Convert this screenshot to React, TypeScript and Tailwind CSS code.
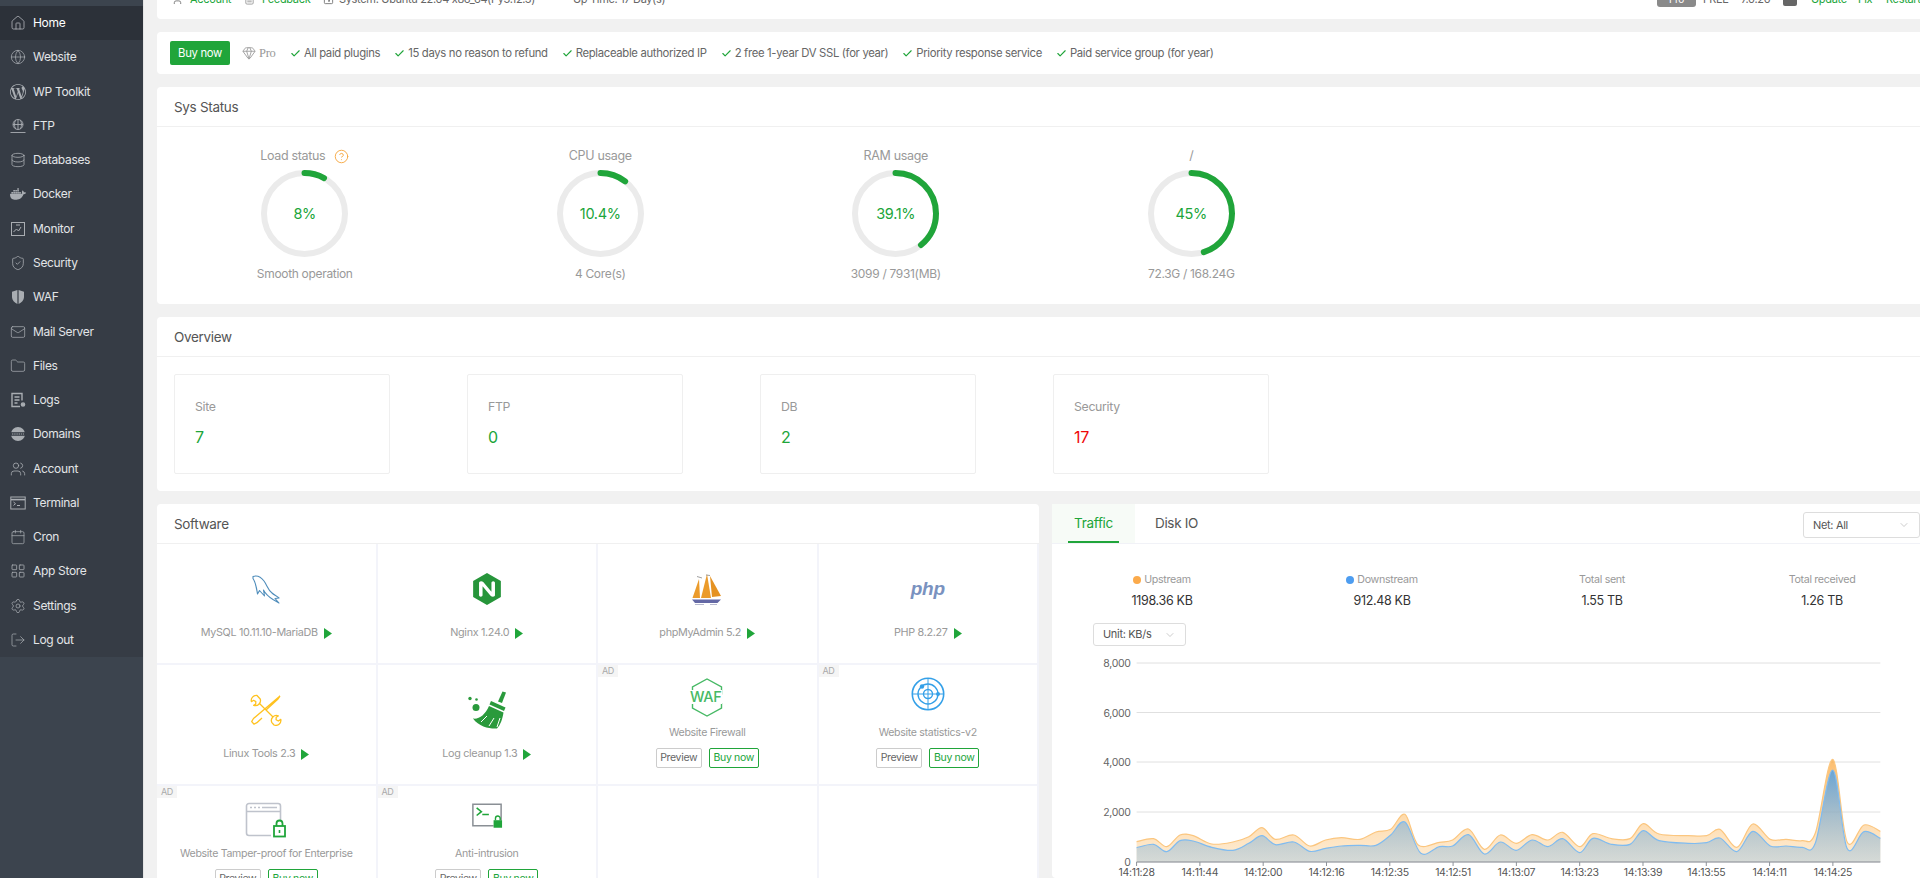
import React from "react";
import {
  House, Globe, Database, ShieldCheck, Mail, Folder, Users, Calendar, LayoutGrid, Settings, LogOut, Check, ChevronDown, Gem, CircleHelp, FileText, User, ActivitySquare,
} from "lucide-react";
import { SiWordpress, SiDocker, SiNginx } from "react-icons/si";

const ic = "w-[16px] h-[16px] text-[#a9adb2]";

function FtpIcon() {
  return (
    <svg viewBox="0 0 16 16" className={ic} fill="none" stroke="currentColor" strokeWidth="0.9">
      <circle cx="8" cy="6.5" r="5" />
      <path d="M3 6.5h10M8 1.5v10M5.5 2.2c-1.3 2.6-1.3 6 0 8.6M10.5 2.2c1.3 2.6 1.3 6 0 8.6M0.5 14.5h15" />
    </svg>
  );
}
function MonitorIcon() {
  return (
    <svg viewBox="0 0 16 16" className={ic} fill="none" stroke="currentColor" strokeWidth="1">
      <rect x="1.5" y="1.5" width="13" height="13" />
      <path d="M3.5 11l3-3 2 2 2.5-4M6 4h4" />
    </svg>
  );
}
function WafIcon() {
  return (
    <svg viewBox="0 0 16 16" className={ic} fill="currentColor">
      <path d="M7.4 1 2 2.8v5.4c0 3 2.5 5.3 5.4 6.8zM8.6 1 14 2.8v5.4c0 3-2.5 5.3-5.4 6.8z" />
    </svg>
  );
}
function LogsIcon() {
  return (
    <svg viewBox="0 0 16 16" className={ic} fill="none" stroke="currentColor" strokeWidth="1.4">
      <path d="M10 14.5H2V1.5h10v7M4.5 5h5M4.5 8h5M4.5 11h3" />
      <circle cx="13" cy="12.5" r="1.6" fill="currentColor" />
    </svg>
  );
}
function DomainsIcon() {
  return (
    <svg viewBox="0 0 16 16" className={ic}>
      <circle cx="8" cy="8" r="7" fill="currentColor" />
      <rect x="0" y="6.2" width="16" height="3.6" fill="#363c45" />
      <path d="M2 8h12" stroke="currentColor" strokeWidth="1.2" strokeDasharray="1.4 .8" />
    </svg>
  );
}
function TerminalIcon() {
  return (
    <svg viewBox="0 0 16 16" className={ic} fill="none" stroke="currentColor" strokeWidth="1">
      <rect x="0.8" y="2" width="14.4" height="12" />
      <path d="M1 4.6h14" strokeWidth="1.6" />
      <path d="M3.5 7l2 1.7-2 1.7M7 10.5h3" />
    </svg>
  );
}

const nav: [string, React.ReactNode][] = [
  ["Home", <House key="a" className={ic} strokeWidth={1.3} />],
  ["Website", <Globe key="a" className={ic} strokeWidth={1.1} />],
  ["WP Toolkit", <SiWordpress key="a" className={ic} />],
  ["FTP", <FtpIcon key="a" />],
  ["Databases", <Database key="a" className={ic} strokeWidth={1.2} />],
  ["Docker", <SiDocker key="a" className={ic} />],
  ["Monitor", <MonitorIcon key="a" />],
  ["Security", <ShieldCheck key="a" className={ic} strokeWidth={1.2} />],
  ["WAF", <WafIcon key="a" />],
  ["Mail Server", <Mail key="a" className={ic} strokeWidth={1.1} />],
  ["Files", <Folder key="a" className={ic} strokeWidth={1.1} />],
  ["Logs", <LogsIcon key="a" />],
  ["Domains", <DomainsIcon key="a" />],
  ["Account", <Users key="a" className={ic} strokeWidth={1.2} />],
  ["Terminal", <TerminalIcon key="a" />],
  ["Cron", <Calendar key="a" className={ic} strokeWidth={1.1} />],
  ["App Store", <LayoutGrid key="a" className={ic} strokeWidth={1.2} />],
  ["Settings", <Settings key="a" className={ic} strokeWidth={1.1} />],
  ["Log out", <LogOut key="a" className={ic} strokeWidth={1.1} />],
];

function Gauge({ title, pct, sub, help }: { title: string; pct: number; sub: string; help?: boolean }) {
  const r = 40.5;
  const c = 2 * Math.PI * r;
  return (
    <div className="w-[295.5px] flex flex-col items-center">
      <div className="flex items-center gap-[9px] text-[12.5px] leading-[20px] text-[#999] h-[20px]">
        <span>{title}</span>
        {help && <CircleHelp className="w-[15px] h-[15px] text-[#f5a742]" strokeWidth={1.5} />}
      </div>
      <div className="grid place-items-center mt-[4px] w-[87px] h-[87px]">
        <svg viewBox="0 0 87 87" className="w-[87px] h-[87px] [grid-area:1/1] -rotate-90">
          <circle cx="43.5" cy="43.5" r={r} fill="none" stroke="#ebebeb" strokeWidth="6" />
          <circle cx="43.5" cy="43.5" r={r} fill="none" stroke="#20a53a" strokeWidth="6" strokeLinecap="round" strokeDasharray={`${(pct / 100) * c} ${c}`} />
        </svg>
        <span className="[grid-area:1/1] text-[14.5px] text-[#20a53a]">{pct}%</span>
      </div>
      <div className="mt-[7px] text-[12px] leading-[20px] text-[#999]">{sub}</div>
    </div>
  );
}

function Dolphin() {
  return (
    <svg viewBox="0 0 28 29" className="w-[28px] h-[29px]" fill="none" stroke="#4f8dbb" strokeWidth="1.1" strokeLinejoin="round">
      <path d="M1 1.5C5 0 9 2 12 6C15 10 16 15 20 18C22 20 25 21 27 23L23 23.5L27 28L21 24.5C17 22 14 20 11.5 15L12.5 21L7.5 15.5L5.5 19C4.5 13 4 8 1 3.5Z" />
    </svg>
  );
}
function Broom() {
  return (
    <svg viewBox="0 0 40 38" className="w-[40px] h-[38px]" fill="#2a9a3c">
      <path d="M35.5 0.5L39 1.5L35 12L31 10.5Z" />
      <path d="M24 10L38.5 16.5L37 20L22.5 13.5Z" />
      <path d="M22 15L36.5 21.5C35.5 28 33.5 34 30 37.5C23 38 12 36 6 27.5C12 28.5 18 24 22 15Z" />
      <path d="M14 31l6-6M22 35l5-8M30 36l3-9" stroke="#fff" strokeWidth="1" fill="none" />
      <circle cx="3" cy="7.5" r="1.7" />
      <circle cx="9.5" cy="8.5" r="1.3" />
      <circle cx="9" cy="16.5" r="3.5" />
    </svg>
  );
}
function Tools() {
  return (
    <svg viewBox="0 0 32 32" className="w-[32px] h-[32px]" fill="none" stroke="#ffc21f" strokeWidth="1.3" strokeLinejoin="round">
      <path d="M30 2 3.5 24.5l-1.8 3 2.2 2.7 3-1.5L12 24M30 2l-2.5 3.5L16 16" />
      <path d="M9 9 23 23" />
      <path d="M7 1.5a5 5 0 0 0-5.6 6.2l2.2-1.4 2.2 1.3-.1 2.5-2 1.2a5 5 0 0 0 6.5-6.3Z" />
      <path d="M24 31a5 5 0 0 0 6.8-5.6l-2.5 1.6-2.2-1.2.1-2.6 2.1-1.3a5 5 0 0 0-6.6 6.4Z" />
    </svg>
  );
}
function Ship() {
  return (
    <svg viewBox="0 0 30 32" className="w-[30px] h-[32px]">
      <path d="M7 6 0.5 25H8z" fill="#eb9b2b" />
      <path d="M15 1 9 25h10z" fill="#eb9b2b" />
      <path d="M18 3 29 23l-9 1z" fill="#e59222" />
      <path d="M5 3.5l5 1.5M14 2l4 .5" stroke="#777" strokeWidth=".7" />
      <path d="M0 26.5h29l-3.5 3.500H3z" fill="#6468a5" />
      <path d="M3 31.5h9M18 31.5h7" stroke="#b6b8cf" strokeWidth="1" />
    </svg>
  );
}
function Shield() {
  return (
    <div className="grid place-items-center w-[36px] h-[40px]">
      <svg viewBox="0 0 36 40" className="w-[36px] h-[40px] [grid-area:1/1]" fill="none" stroke="#47b965" strokeWidth="1.4">
        <path d="M32.5 17.5V10L18 2 3.5 10v4M3.5 26v5L18 39l14.5-8V26" />
      </svg>
      <span className="[grid-area:1/1] text-[14.5px] font-medium text-[#47b965] -ml-[3px] bg-white leading-[14px]">WAF</span>
    </div>
  );
}
function Radar() {
  return (
    <svg viewBox="0 0 34 34" className="w-[34px] h-[34px]" fill="none" stroke="#34a0e8" strokeWidth="1.4">
      <circle cx="17" cy="17" r="15.7" strokeWidth="1.6" />
      <circle cx="17" cy="17" r="10" />
      <circle cx="17" cy="17" r="4.5" />
      <path d="M17 1v32M1 17h32" strokeWidth="1" />
      <circle cx="11" cy="9.5" r="2.2" fill="#34a0e8" stroke="none" />
      <circle cx="27" cy="17" r="2" fill="#34a0e8" stroke="none" />
    </svg>
  );
}
function Tamper() {
  return (
    <svg viewBox="0 0 42 36" className="w-[42px] h-[36px]" fill="none">
      <path d="M26 33.5H4a2.500 2.500 0 0 1-2.500-2.500V4A2.500 2.500 0 0 1 4 1.500h29A2.500 2.500 0 0 1 35.500 4v15" stroke="#bfc3cc" strokeWidth="1.6" />
      <path d="M2 9.5h33" stroke="#bfc3cc" strokeWidth="1.4" />
      <path d="M5 5.5h2M9 5.5h2M13 5.5h2M17 5.5h15" stroke="#bfc3cc" strokeWidth="1.6" />
      <rect x="29" y="24" width="11" height="10.5" stroke="#20a53a" strokeWidth="1.8" />
      <path d="M31.5 24v-2.5a3 3 0 0 1 6 0V24" stroke="#20a53a" strokeWidth="1.8" />
      <path d="M34.5 28v3" stroke="#20a53a" strokeWidth="1.6" />
    </svg>
  );
}
function Anti() {
  return (
    <svg viewBox="0 0 34 28" className="w-[32px] h-[27px]" fill="none">
      <path d="M24 25H2V2h30v17" stroke="#8a8f95" strokeWidth="1.6" />
      <path d="M6 6l5 4-5 4M12 13h7" stroke="#20a53a" strokeWidth="1.7" />
      <rect x="24" y="19" width="9" height="8" fill="#20a53a" />
      <path d="M26 19v-2a2.5 2.5 0 0 1 5 0v2" stroke="#20a53a" strokeWidth="1.5" />
    </svg>
  );
}

function SoftCell({ icon, name, ad, clip }: { icon: React.ReactNode; name: string; ad?: boolean; clip?: boolean }) {
  if (ad) {
    return (
      <div className="relative h-[121px] border-r-2 border-b-2 border-[#f3f4fa] flex flex-col items-center">
        <span className="absolute left-0 top-0 w-[20px] h-[12px] bg-[#f5f5f5] text-[9px] leading-[12px] text-center text-[#aaa]">AD</span>
        <div className={`${clip ? "h-[59px] pt-[16px]" : "h-[59px] pt-[12px]"} flex items-start justify-center`}>{icon}</div>
        <div className="text-[10.6px] leading-[16px] text-[#999] mt-[1px] h-[16px] whitespace-nowrap">{name}</div>
        <div className="flex gap-[7px] mt-[7px]">
          <span className="w-[46px] h-[20px] flex items-center justify-center rounded-[2px] border border-[#ccc] text-[10.5px] text-[#666]">Preview</span>
          <span className="w-[50px] h-[20px] flex items-center justify-center rounded-[2px] border border-[#20a53a] text-[10.5px] text-[#20a53a]">Buy now</span>
        </div>
      </div>
    );
  }
  return (
    <div className="h-[121px] border-r-2 border-b-2 border-[#f3f4fa] flex flex-col items-center">
      <div className="h-[40px] mt-[25px] flex items-center justify-center">{icon}</div>
      <div className="mt-[16px] flex items-center gap-[6px] text-[10.8px] leading-[16px] text-[#999] whitespace-nowrap">
        {name}
        <svg viewBox="0 0 8 11" className="w-[8px] h-[11px]" fill="#20a53a"><path d="M0 0 8 5.5 0 11Z" /></svg>
      </div>
    </div>
  );
}

const oz = "88,365;120,356;145,380;170,345;195,347;230,372;270,366;300,350;325,323;350,358;385,345;415,378;445,360;475,353;510,358;540,336;568,328;595,283;620,375;660,367;685,360;715,327;745,388;775,345;805,370;835,344;865,360;893,337;925,380;950,341;985,356;1020,356;1045,311;1075,342;1130,347;1165,347;1190,328;1222,382;1252,312;1285,358;1315,358;1345,362;1370,340;1403,118;1430,365;1462,315;1493,334";
const bz = "88,383;120,373;145,395;170,362;195,363;230,382;270,391;300,370;325,347;350,374;385,366;415,394;445,385;475,378;510,376;540,376;568,345;595,306;625,400;660,380;685,378;715,344;745,402;775,366;805,391;835,360;865,380;893,356;925,398;950,355;985,373;1020,373;1045,332;1075,362;1130,370;1165,368;1190,354;1222,395;1252,334;1285,378;1315,378;1345,382;1370,370;1403,150;1430,385;1462,335;1493,355";

function pts(s: string) {
  return s.split(";").map((p) => {
    const [x, y] = p.split(",").map(Number);
    return [1090 + x / 1.889 - 1052, 720 + y / 3 - 650] as [number, number];
  });
}
function smooth(p: [number, number][]) {
  let d = `M${p[0][0]},${p[0][1]}`;
  for (let i = 0; i < p.length - 1; i++) {
    const p0 = p[Math.max(i - 1, 0)];
    const p1 = p[i];
    const p2 = p[i + 1];
    const p3 = p[Math.min(i + 2, p.length - 1)];
    const c1x = p1[0] + (p2[0] - p0[0]) / 6;
    const c1y = p1[1] + (p2[1] - p0[1]) / 6;
    const c2x = p2[0] - (p3[0] - p1[0]) / 6;
    const c2y = p2[1] - (p3[1] - p1[1]) / 6;
    d += `C${c1x},${c1y} ${c2x},${c2y} ${p2[0]},${p2[1]}`;
  }
  return d;
}

function Chart() {
  const o = pts(oz);
  const b = pts(bz);
  const base = 212;
  const x0 = o[0][0];
  const x1 = o[o.length - 1][0];
  const od = smooth(o);
  const bd = smooth(b);
  const ys: [number, string][] = [[13, "8,000"], [62.5, "6,000"], [112, "4,000"], [162, "2,000"], [212, "0"]];
  const times = ["14:11:28", "14:11:44", "14:12:00", "14:12:16", "14:12:35", "14:12:51", "14:13:07", "14:13:23", "14:13:39", "14:13:55", "14:14:11", "14:14:25"];
  return (
    <svg viewBox="0 0 868 228" className="w-[868px] h-[228px] mt-[4px] shrink-0">
      <defs>
        <linearGradient id="og" gradientUnits="userSpaceOnUse" x1="0" x2="0" y1="108" y2="212">
          <stop offset="0" stopColor="#fba63c" stopOpacity="0.75" />
          <stop offset="1" stopColor="#fdb95c" stopOpacity="0.25" />
        </linearGradient>
        <linearGradient id="bg" gradientUnits="userSpaceOnUse" x1="0" x2="0" y1="118" y2="212">
          <stop offset="0" stopColor="#4d9ee6" stopOpacity="0.85" />
          <stop offset="1" stopColor="#9dbfd8" stopOpacity="0.42" />
        </linearGradient>
      </defs>
      {ys.map(([y, t]) => (
        <g key={t}>
          <line x1={x0} x2={x1} y1={y} y2={y} stroke="#e0e0e0" strokeWidth="1" />
          <text x={x0 - 6} y={y + 4} textAnchor="end" fontSize="10.5" fill="#666">{t}</text>
        </g>
      ))}
      <path d={`${od}L${x1},${base}L${x0},${base}Z`} fill="url(#og)" />
      <path d={od} fill="none" stroke="#fbc67f" strokeWidth="1.2" />
      <path d={`${bd}L${x1},${base}L${x0},${base}Z`} fill="url(#bg)" />
      <path d={bd} fill="none" stroke="#7fbbf0" strokeWidth="1.2" />
      <line x1={x0} x2={x1} y1={base} y2={base} stroke="#8d9299" strokeWidth="1.2" />
      {times.map((t, i) => {
        const x = x0 + i * 63.3;
        return (
          <g key={t}>
            <line x1={x} x2={x} y1={base} y2={base + 4} stroke="#8d9299" />
            <text x={x} y={base + 14} textAnchor="middle" fontSize="10.5" fill="#555">{t}</text>
          </g>
        );
      })}
    </svg>
  );
}

export default function App() {
  const perks: string[] = ["All paid plugins", "15 days no reason to refund", "Replaceable authorized IP", "2 free 1-year DV SSL (for year)", "Priority response service", "Paid service group (for year)"];
  return (
    <div className="flex h-screen overflow-hidden bg-[#f1f1f1] text-[#666] tracking-[-0.02em] [font-family:Inter,'Noto_Sans',sans-serif]">
      <aside className="w-[143px] shrink-0 bg-[#3c444e] pt-[6px]">
        {nav.map(([name, icon], i) => (
          <div key={name} className={`h-[34.28px] flex items-center gap-[7px] pl-[10px] text-[12px] ${i === 0 ? "bg-[#2c3139] text-white" : "bg-[#363c45] text-[#e3e5e7]"}`}>
            <span className="w-[16px] flex justify-center">{icon}</span>
            {name}
          </div>
        ))}
      </aside>
      <div className="w-[14px] shrink-0 border-l border-[#e4e4e4]" />
      <main className="flex-1 min-w-0 flex flex-col gap-[13px] -mt-[31px]">
        <section className="shrink-0 h-[50px] pt-[10px] bg-white rounded-bl-[4px] flex items-center justify-between pl-[15px] text-[11px] text-[#666] whitespace-nowrap">
          <div className="flex items-center">
            <User className="w-[11px] h-[11px] text-[#777]" />
            <span className="ml-[7px] w-[39px] text-[#20a53a]">Account</span>
            <FileText className="ml-[15px] w-[11px] h-[11px] text-[#999]" />
            <span className="ml-[7px] w-[45px] text-[#20a53a]">Feedback</span>
            <ActivitySquare className="ml-[16px] w-[11px] h-[11px] text-[#777]" />
            <span className="ml-[5px] w-[207px]">System: Ubuntu 22.04 x86_64(Py3.12.3)</span>
            <span className="ml-[27px]">Up Time: 17 Day(s)</span>
          </div>
          <div className="flex items-center">
            <span className="w-[39px] h-[16px] bg-[#8a8a8a] rounded-[3px] text-white text-center text-[10px] leading-[16px]">Pro</span>
            <span className="ml-[7px] w-[24px]">FREE</span>
            <span className="ml-[14px] w-[27px]">7.0.20</span>
            <span className="ml-[15px] w-[14px] h-[14px] bg-[#666] rounded-[2px]" />
            <span className="ml-[14px] w-[34px] text-[#20a53a]">Update</span>
            <span className="ml-[13px] w-[14px] text-[#20a53a]">Fix</span>
            <span className="ml-[14px] w-[34px] text-[#20a53a]">Restart</span>
          </div>
        </section>

        <section className="shrink-0 h-[42px] bg-white rounded-l-[4px] flex items-center pl-[13px] text-[11.3px] text-[#666] whitespace-nowrap">
          <span className="w-[60px] h-[24px] rounded-[2px] bg-[#20a53a] text-white text-center leading-[24px]">Buy now</span>
          <Gem className="ml-[11px] w-[16px] h-[14px] text-[#999]" strokeWidth={1.5} />
          <span className="ml-[2px] w-[16px] text-[#999] [font-family:'Liberation_Serif',serif] text-[12.5px]">Pro</span>
          <div className="flex items-center gap-[14px] ml-[15px] mt-[1px]">
            {perks.map((p) => (
              <span key={p} className="flex items-center gap-[3px]">
                <Check className="w-[11px] h-[11px] text-[#20a53a]" strokeWidth={2.5} />
                {p}
              </span>
            ))}
          </div>
        </section>

        <section className="shrink-0 h-[217px] bg-white rounded-l-[4px]">
          <h2 className="h-[40px] pl-[17px] border-b border-[#f0f0f0] text-[13.5px] text-[#555] leading-[40px]">Sys Status</h2>
          <div className="flex pt-[19px]">
            <Gauge title="Load status" pct={8} sub="Smooth operation" help />
            <Gauge title="CPU usage" pct={10.4} sub="4 Core(s)" />
            <Gauge title="RAM usage" pct={39.1} sub="3099 / 7931(MB)" />
            <Gauge title="/" pct={45} sub="72.3G / 168.24G" />
          </div>
        </section>

        <section className="shrink-0 h-[174px] bg-white rounded-l-[4px]">
          <h2 className="h-[40px] pl-[17px] border-b border-[#f0f0f0] text-[13.5px] text-[#555] leading-[40px]">Overview</h2>
          <div className="flex gap-[77px] pl-[17px] pt-[17px]">
            {[["Site", "7"], ["FTP", "0"], ["DB", "2"], ["Security", "17"]].map(([l, v]) => (
              <div key={l} className="w-[216px] h-[100px] border border-[#efefef] rounded-[2px] pl-[20px] pt-[23px]">
                <div className="text-[12.3px] leading-[18px] text-[#999]">{l}</div>
                <div className={`mt-[11px] text-[16px] leading-[20px] ${l === "Security" ? "text-[#ef0808]" : "text-[#20a53a]"}`}>{v}</div>
              </div>
            ))}
          </div>
        </section>

        <div className="flex gap-[13px] items-start">
          <section className="w-[882px] shrink-0 bg-white rounded-[4px]">
            <h2 className="h-[40px] pl-[17px] border-b border-[#f0f0f0] text-[13.5px] text-[#555] leading-[40px]">Software</h2>
            <div className="grid grid-cols-4">
              <SoftCell name="MySQL 10.11.10-MariaDB" icon={<Dolphin />} />
              <SoftCell name="Nginx 1.24.0" icon={<SiNginx className="w-[32px] h-[32px] text-[#26953a]" />} />
              <SoftCell name="phpMyAdmin 5.2" icon={<Ship />} />
              <SoftCell name="PHP 8.2.27" icon={<span className="text-[19px] font-bold italic text-[#7a92bf] [font-family:'Liberation_Sans',sans-serif]">php</span>} />
              <SoftCell name="Linux Tools 2.3" icon={<Tools />} />
              <SoftCell name="Log cleanup 1.3" icon={<Broom />} />
              <SoftCell ad name="Website Firewall" icon={<Shield />} />
              <SoftCell ad name="Website statistics-v2" icon={<Radar />} />
              <SoftCell ad clip name="Website Tamper-proof for Enterprise" icon={<Tamper />} />
              <SoftCell ad clip name="Anti-intrusion" icon={<Anti />} />
              <div className="h-[121px] border-r-2 border-[#f3f4fa]" />
              <div className="h-[121px] border-r-2 border-[#f3f4fa]" />
            </div>
          </section>

          <section className="flex-1 min-w-0 bg-white rounded-l-[4px] flex flex-col">
            <div className="h-[40px] flex items-start border-b border-[#f1f2f7] shrink-0">
              <div className="w-[83px] h-[39px] bg-[#f7fbf7] flex justify-center relative text-[13.5px] leading-[39px] text-[#20a53a]">
                Traffic
                <span className="absolute left-[16px] right-[16px] bottom-0 h-[2px] bg-[#20a53a]" />
              </div>
              <div className="ml-[20px] text-[13.5px] leading-[39px] text-[#555]">Disk IO</div>
              <div className="ml-auto mt-[8px] w-[117px] h-[26px] rounded-[3px] border border-[#ddd] flex items-center justify-between px-[9px] text-[11px] text-[#555]">
                Net: All
                <ChevronDown className="w-[12px] h-[12px] text-[#aaa]" strokeWidth={1.2} />
              </div>
            </div>
            <div className="grid grid-cols-[220px_220px_220px_220px] pt-[28px] text-center">
              {[["Upstream", "1198.36 KB", "bg-[#fbaa4b]"], ["Downstream", "912.48 KB", "bg-[#4d9df0]"], ["Total sent", "1.55 TB", ""], ["Total received", "1.26 TB", ""]].map(([l, v, c]) => (
                <div key={l}>
                  <div className="flex items-center justify-center gap-[3px] text-[10.7px] leading-[16px] text-[#999]">
                    {c && <span className={`w-[8px] h-[8px] rounded-full ${c}`} />}
                    {l}
                  </div>
                  <div className="mt-[4px] text-[12.5px] leading-[18px] text-[#333]">{v}</div>
                </div>
              ))}
            </div>
            <div className="ml-[41px] mt-[13px] w-[93px] h-[23px] rounded-[3px] border border-[#ddd] flex items-center justify-between px-[9px] text-[11px] text-[#555]">
              Unit: KB/s
              <ChevronDown className="w-[12px] h-[12px] text-[#aaa]" strokeWidth={1.2} />
            </div>
            <Chart />
          </section>
        </div>
      </main>
    </div>
  );
}
